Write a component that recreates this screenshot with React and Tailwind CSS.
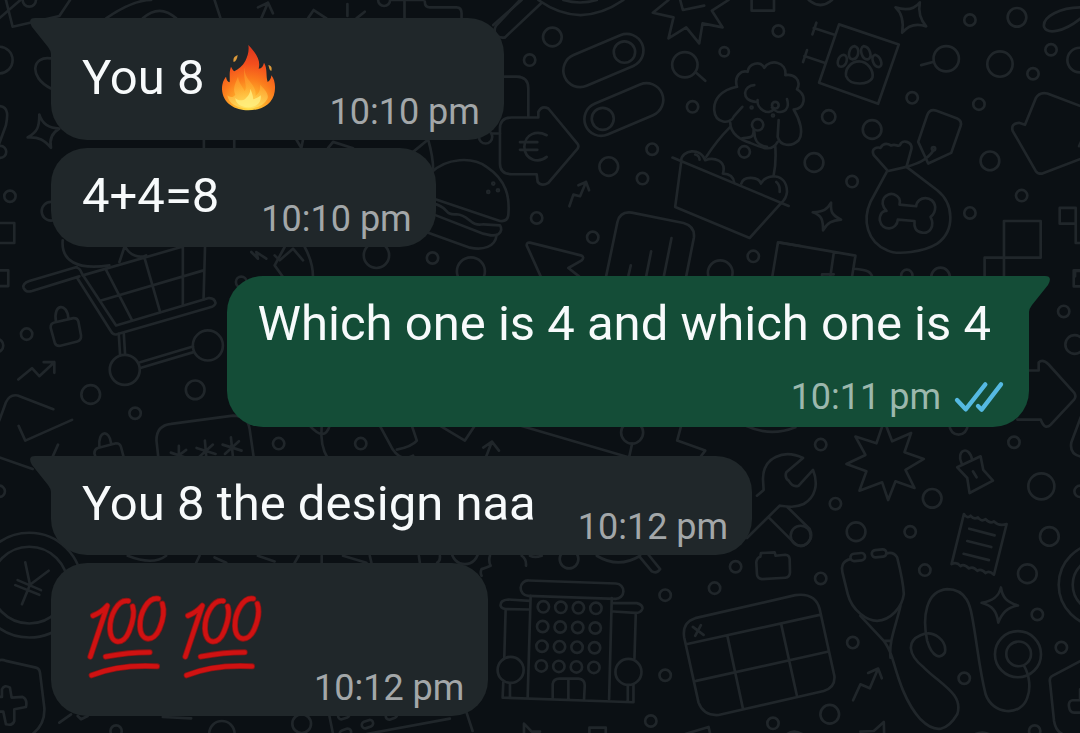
import clsx from 'clsx'

const WINDOWS = [0, 1, 2, 3].flatMap((row) => [0, 1, 2, 3].map((col) => [190 + 52.5 * col - 2 * row, 198 + 59 * row + 1.5 * col, 17]))

// Wallpaper tiles: each one is drawn on a 3x grid from its own origin.
const TILES = [
  {
    origin: [0, 0],
    circles: [[90, 0, 20], [1153, 0, 18], [0, 180, 40], [3, 455, 18], [32, 588, 17], [155, 633, 28], [1457, 410, 20], [1480, 550, 3], [1465, 575, 3], [1494, 570, 3], [1130, 765, 38], [1298, 773, 17]],
    paths: [
      'M20 0 L40 80 L180 48 L212 0 M0 55 L75 -10',
      'M320 55 Q400 0 455 0 M430 55 Q480 10 530 55 M645 0 L663 55',
      'M785 55 L805 8 M775 22 L805 8 L820 40 M925 55 L942 30 L980 55 M1043 12 V48 M1095 35 L1070 55',
      'M1175 0 H1270 M1214 0 V55 M1275 5 Q1275 22 1290 22 H1370 Q1385 22 1385 40 V55',
      'M1560 0 L1490 75 Q1480 88 1487 102 Q1500 116 1515 112 M1515 230 H1560',
      'M155 175 C100 165 85 230 155 265 M0 318 C30 320 25 350 20 375 L0 430',
      'M120 343 C128 370 145 385 180 385 C155 400 150 420 155 443 C135 420 120 410 85 412 C115 395 120 380 120 343Z',
      'M0 668 H45 V728 H0 M613 418 V444 M704 418 V444 M890 418 L905 444 L910 418 M985 444 L1000 425 L1060 444',
      'M1240 455 L1285 418 Q1300 470 1300 510 M1475 400 H1500',
      'M1290 520 C1340 470 1420 470 1460 500 C1520 540 1530 590 1525 645 Q1522 665 1500 662 L1300 595',
      'M1300 610 C1350 620 1330 645 1370 642 C1410 645 1410 680 1450 672 L1500 675 Q1510 690 1495 702 C1480 708 1470 705 1450 700 L1295 640',
      'M1490 705 C1485 740 1450 750 1410 742 L1285 697',
      'M755 755 L775 775 L770 755 L800 775 M825 765 L840 780 L880 745 L910 780',
    ],
  },
  {
    origin: [500, 0],
    circles: [[157, 111, 28], [89, 180, 17], [373, 156, 32], [308, 356, 33], [672, 155, 14], [834, 93, 17], [577, 320, 17], [326, 499, 28], [456, 447, 17], [427, 535, 17], [110, 653, 17], [278, 711, 17], [732, 455, 17], [759, 768, 17], [660, 817, 37], [554, 194, 38], [772, 374, 17], [825, 315, 10], [754, 322, 3], [818, 346, 3]],
    pills: [[190, 161, 252, 100, -23], [253, 307, 248, 100, -23]],
    paths: [
      'M-20 75 L65 0 M15 112 L125 8 M115 0 Q240 90 370 0 M190 0 Q240 15 290 0 M588 218 L615 242',
      'M505 0 L458 38 L520 52 L505 115 L558 82 L597 130 L607 70 L667 82 L635 32 L685 0 M540 0 L548 30 L612 17 M754 0 V32 H821 V0',
      'M710 260 C700 225 725 210 742 215 C745 190 780 180 792 203 C810 175 860 185 855 225 C880 220 905 240 890 268 C920 285 915 325 880 328 C900 360 910 400 895 420 C875 440 840 440 832 410 L835 360',
      'M710 260 C660 270 640 300 642 330 C645 370 690 375 702 347 L726 320 M690 368 C690 400 720 420 750 428 C790 445 815 455 832 425',
      'M762 255 C730 255 720 300 765 305 M772 300 C768 325 805 350 822 325 M815 322 C835 348 872 335 860 297',
      'M760 390 C760 420 740 410 725 415 M762 395 C762 420 775 438 800 440 M690 380 Q650 420 618 470 M825 440 Q828 490 820 525',
      'M517 472 L865 617 M543 485 L525 620 L748 713 L843 608',
      'M543 480 C545 450 600 440 615 480 C640 470 680 480 668 520 C690 520 700 530 702 548 M723 550 C730 525 775 530 782 550 C795 520 860 515 860 575 Q858 595 843 608 M585 463 Q597 465 598 478 M828 545 Q840 555 838 575',
      'M12 230 H50 Q85 230 85 265 V348 M110 522 H35 Q0 522 0 490 V385 Q0 352 35 352 H115 V335 Q125 315 145 325 L232 430 Q238 438 232 446 L145 548 Q125 560 113 545 Z',
      'M140 405 C110 390 75 400 73 440 C75 480 115 490 140 470 M60 426 H112 M60 449 H112',
      'M208 618 L220 583 L240 588 L258 545 M235 555 L258 545 L267 570',
      'M122 828 L80 735 Q80 725 90 727 L242 765 Q255 770 245 780 L205 803 L237 828',
      'M318 828 L352 665 Q360 632 395 637 L550 668 Q585 678 581 712 L558 828 M392 795 L385 825 M453 753 L438 828 M514 713 L491 828',
      'M816 828 L833 726 L900 737',
    ],
  },
  {
    origin: [780, 0],
    circles: [[568, 60, 17], [709, 52, 28], [811, 149, 17], [497, 176, 38], [658, 192, 38], [757, 221, 17], [897, 180, 37], [395, 293, 17], [595, 312, 17], [145, 350, 20], [275, 388, 28], [101, 487, 28], [215, 544, 17], [628, 482, 28], [723, 586, 17], [568, 638, 17], [379, 825, 17], [480, 830, 28], [459, 446, 5]],
    paths: [
      'M85 0 Q120 30 155 0 M460 185 L422 195 M900 22 C840 22 785 50 790 80 C800 105 850 95 900 55',
      'M176 73 L355 133 L293 311 L116 248Z M162 104 L100 84 M108 68 L96 103 M132 188 L72 168 M80 150 L68 186',
      'M236 184 C262 184 280 212 276 232 C268 256 208 258 197 228 C193 206 212 184 236 184Z',
      'M190 164 C206 168 200 198 182 200 C164 200 172 166 190 164Z M222 138 C240 144 236 176 216 178 C198 174 206 140 222 138Z M250 138 C268 140 278 172 262 178 C244 180 234 144 250 138Z M284 164 C300 168 310 196 296 201 C278 200 268 168 284 164Z',
      'M345 22 C375 32 400 30 418 7 C412 40 420 60 437 79 C405 68 380 80 365 98 C370 65 365 40 345 22Z',
      'M152 607 C150 635 155 645 182 658 C155 660 140 668 128 690 C128 660 125 645 97 636 C130 635 140 628 152 607Z',
      'M413 425 L440 345 Q448 325 468 332 L530 355 Q545 362 540 378 L512 458 L443 490 Z M459 450 C440 480 410 490 378 500',
      'M320 513 L378 500 L470 570 C520 610 525 690 470 730 C430 755 350 765 320 750 C260 725 245 660 270 605 Z',
      'M320 510 L280 465 C270 445 290 440 300 443 C310 425 325 432 332 436 C345 430 352 440 358 435 C365 415 395 425 393 445 L378 500',
      'M357 613 L407 618 C410 585 460 585 464 620 Q464 640 450 650 C465 680 445 700 425 697 C405 695 400 680 402 662 L352 658 C350 690 305 695 298 660 C297 640 308 630 318 632 C290 600 320 575 340 582 C355 587 362 600 357 613Z',
      'M900 318 L800 280 Q775 275 765 295 L733 374 L715 368 Q690 370 696 392 L765 512 Q772 522 785 520 L900 476 M895 438 L905 415',
      'M670 662 H780 V772 H670Z M612 828 V772 H670 V828 M837 623 H885 V670 H837Z M885 670 V728 H900 M883 828 V812 H900',
      'M0 727 L225 766 L215 828 M160 758 L150 828 M125 828 V822 H160 M222 805 C250 808 270 810 275 828',
    ],
  },
  {
    origin: [0, 240],
    circles: [[82, 281, 17], [-8, 315, 20], [274, 462, 28], [587, 448, 28], [407, 518, 17], [376, 388, 45], [625, 315, 45], [725, 125, 16]],
    paths: [
      'M0 90 H27 V137 H0',
      'M232 80 L90 122 Q68 130 73 143 Q80 157 98 152 L240 108 M225 82 Q240 78 248 100 L350 255 L628 173 Q645 172 648 188 Q645 198 630 201 L350 282 Q340 283 335 273 L235 115',
      'M250 105 L545 20 M318 85 L398 240 M435 52 L482 215 M550 0 V193 M617 0 L612 178 M305 180 L612 90',
      'M190 0 C185 60 230 90 330 75 M375 20 L360 65 M378 20 C390 45 420 55 440 45 M358 280 L362 345 M373 278 L377 342 M422 365 L580 318 M425 382 L582 335',
      'M165 246 L222 233 Q234 232 237 243 L245 285 Q246 300 234 303 L183 316 Q170 318 166 306 L154 262 Q153 249 165 246Z M170 243 C160 190 203 185 207 233',
      'M57 417 L98 383 L120 407 L165 365 M133 365 H165 V397',
      'M0 540 L20 485 Q32 460 55 465 L162 506 M58 556 L78 600 L218 538 M0 650 L100 685 M160 648 L176 612',
      'M290 655 L285 638 Q285 626 295 622 L350 608 Q362 608 365 620 L374 655 M300 618 C295 570 330 565 335 608',
      'M477 655 L471 600 Q470 555 515 550 L700 525 Q745 525 750 565 L763 655',
      'M538 616 V664 M514 636 L562 652 M519 658 L560 628 M616 600 L621 658 M591 622 L648 640 M598 650 L640 612 M694 590 L700 648 M669 612 L726 630 M676 640 L718 602',
    ],
  },
  {
    origin: [220, 240],
    circles: [[753, 93, 42], [177, 609, 17], [423, 609, 17], [1236, 576, 33], [2214, 555, 27], [2529, 213, 17], [2562, 312, 28]],
    paths: [
      'M195 20 L165 75 L190 110 M255 20 Q280 66 280 110 M2580 90 H2559 V138 H2580',
      'M2400 390 H2454 V366 Q2466 354 2484 372 L2560 456 Q2568 468 2560 477 L2490 552 Q2472 570 2460 537 H2390',
      'M270 555 Q315 605 330 555 M306 555 Q300 615 325 655 M480 555 L519 627 Q545 665 580 645 M576 555 L591 600 Q576 618 531 627',
      'M660 555 L735 600 L765 555 M798 650 L816 603 L837 630 M790 621 L816 603 M900 555 L1225 650 M1236 609 L1227 650 M1383 555 L1371 600 L1455 630 L1440 650 M1575 555 Q1650 590 1725 560',
    ],
  },
  {
    origin: [740, 400],
    circles: [[241, 132, 17], [285, 309, 17], [347, 393, 28], [509, 393, 17], [575, 293, 28], [553, 508, 17], [241, 533, 17], [337, 725, 17], [268, 940, 28], [98, 967, 17], [820, 125, 17], [902, 257, 39], [926, 407, 28], [860, 519, 28], [890, 641, 17], [962, 740, 17], [671, 832, 17], [882, 990, 17], [1018, 272, 17], [832, 760, 69], [834, 759, 37], [1078, 552, 124], [1078, 552, 82]],
    pills: [[330, 459, 44, 22, -6], [394, 448, 44, 22, -6]],
    paths: [
      'M188 172 C130 145 68 170 68 235 L70 268 L50 285 M188 172 L138 215 Q132 230 145 240 Q158 262 175 255 L218 208 C235 250 225 290 190 310 C165 322 140 318 118 315 L20 412 M85 350 L160 425 Q180 445 200 428 Q220 410 208 385 L140 318',
      'M425 78 L408 128 L345 108 L375 163 L318 190 L378 212 L357 270 L425 245 L443 298 L465 242 L522 262 L495 208 L550 175 L492 155 L512 97 L455 122 L438 78',
      'M663 188 C645 150 685 130 695 178 M650 200 L720 167 L728 208 L757 240 L687 277 L680 232 Z M697 212 L708 230',
      'M670 340 Q680 355 690 345 Q700 358 712 350 Q722 365 735 355 Q748 370 760 362 Q775 378 798 370 L760 522 Q745 508 735 517 Q722 502 710 510 Q698 495 685 503 Q670 488 660 496 Q648 482 633 490Z M686 384 L762 404 M680 421 L752 439 M669 459 L745 478',
      'M60 468 L62 457 L103 455 L106 465 L135 462 Q147 463 148 475 L149 515 Q148 530 135 531 L65 535 Q50 533 50 520 L48 485 Q50 470 60 468Z',
      'M330 475 C305 480 302 500 306 515 L322 580 C335 630 380 660 410 660 C450 658 485 620 490 580 C488 540 475 490 470 470 Q460 452 437 458',
      'M360 645 L430 720 Q445 740 455 770 C470 820 490 900 540 955 C585 1000 620 990 650 940 C670 880 600 850 550 800 C500 760 500 720 540 703 C580 685 620 720 613 755 C600 775 575 770 560 720 C545 650 555 570 620 565 C680 565 690 620 695 650 C710 730 715 800 735 880 C755 940 840 950 860 890 C872 860 865 820 850 795 M480 615 C465 680 445 720 450 770 M430 720 H450',
      'M338 898 L360 850 L388 862 L413 803 M383 816 L413 803 L424 832',
      'M781 560 C785 590 800 605 832 614 C800 620 785 635 773 665 C768 630 755 615 723 606 C760 600 775 585 781 560Z',
      'M1020 780 L935 825 Q925 830 928 845 L940 960 Q945 990 965 999 M1020 898 H995 Q982 900 985 918 Q987 935 1000 935 H1020 M1018 865 V898',
      'M1020 50 L992 125 Q985 160 1020 168 M360 992 L400 990 L430 963 L431 999 M705 999 Q725 990 745 999 M140 999 Q160 985 185 999',
    ],
  },
  {
    origin: [480, 540],
    circles: [[267, 55, 28], [555, 163, 17], [703, 142, 17], [766, 78, 17], [555, 403, 17], [512, 540, 17], [961, -15, 30], [92, 387, 39], [445, 393, 39], ...WINDOWS],
    pills: [[122, 119, 308, 46, 2]],
    paths: [
      'M30 45 Q25 60 32 75 Q20 80 5 85 Q0 95 5 105 M125 45 Q140 55 138 75 M150 45 Q165 52 185 45 M350 45 Q415 85 480 45 M480 50 L515 92 Q530 100 540 85 L505 42',
      'M152 165 L143 470 M395 172 L387 475 M150 180 L85 176 Q60 178 62 195 Q65 205 85 205 L148 206 M397 187 H470 Q488 192 487 203 Q483 217 465 216 L400 212 M77 207 L73 350 M467 218 L463 352',
      'M70 425 L68 470 L460 484 V430 M90 427 V468 M443 433 V482 M218 470 V430 Q220 412 240 413 H295 Q315 415 314 435 L312 475 M265 415 V472',
      'M612 290 Q605 245 645 232 L945 163 Q1005 155 1018 205 L1062 405 Q1065 440 1030 450 L715 522 Q670 525 655 485 Z M618 310 L1018 222 M648 420 L1045 332 M742 288 L788 503 M903 252 L950 466 M638 258 L670 282 M662 253 L645 285',
      'M132 579 V548 L155 572 H180 M328 579 V560 H377 V579 M615 579 L685 558 L690 579',
    ],
  },
  {
    origin: [0, 440],
    circles: [[0, 152, 17], [90, 433, 157], [90, 433, 115], [1395, 330, 40], [350, 870, 17], [667, 878, 38], [906, 848, 28]],
    pills: [[1015, 815, 35, 20, -20], [1086, 842, 35, 20, -20], [1020, 868, 35, 20, -20], [1158, 816, 35, 20, -20]],
    paths: [
      'M78 365 L92 432 L148 390 M92 432 L68 490 M55 418 L125 448 M48 433 L120 462',
      'M0 658 Q10 655 20 660 L110 680 Q120 682 122 695 L135 800 Q138 850 100 879',
      'M0 768 L8 768 V745 Q15 730 32 740 L37 770 L70 768 Q85 775 80 798 L45 805 V840 Q40 855 20 850 L12 812 H0',
      'M385 345 Q460 375 500 345 M590 366 L600 345 M645 350 L680 366 M775 345 L825 362 M885 366 L897 345 M966 345 V366 M1030 345 L1100 366 M1110 345 L1115 366 M1257 345 L1260 366 M1320 345 Q1322 360 1312 366',
      'M180 845 L215 820 M235 825 L245 835 L265 825 M490 828 L575 832 M988 820 L1000 879 M1400 815 L1418 870 M1100 879 L1350 833',
    ],
  },
]

const HUNDRED =
  'M54 92 Q80 82 97 62 L46 215 M160 48 C128 42 104 92 105 132 C107 180 145 182 162 140 C174 110 180 85 173 64 M250 41 C218 36 194 84 195 124 C197 172 236 172 253 132 C265 104 270 80 262 56 M92 215 Q160 202 224 202 M50 271 Q130 238 246 244'

function Wallpaper() {
  return (
    <svg className="absolute inset-0 h-full w-full" viewBox="0 0 1080 733" preserveAspectRatio="xMidYMid slice" aria-hidden="true">
      <g fill="none" stroke="#20262a" strokeWidth="8" strokeLinecap="round" strokeLinejoin="round">
        {TILES.map(({ origin, circles, pills = [], paths }, i) => (
          <g key={i} transform={`translate(${origin[0]} ${origin[1]}) scale(0.33333)`}>
            {circles.map(([cx, cy, r], j) => (
              <circle key={j} cx={cx} cy={cy} r={r} />
            ))}
            {pills.map(([x, y, w, h, turn], j) => (
              <rect key={j} x={x} y={y} width={w} height={h} rx={h / 2} transform={`rotate(${turn} ${x + h / 2} ${y + h / 2})`} />
            ))}
            {paths.map((d, j) => (
              <path key={j} d={d} />
            ))}
          </g>
        ))}
      </g>
    </svg>
  )
}

function Fire() {
  return (
    <svg className="h-[70px] w-[72px] shrink-0" viewBox="48 21 216 210" role="img" aria-label="Fire">
      <defs>
        <radialGradient id="flame" cx="145" cy="215" r="175" gradientUnits="userSpaceOnUse">
          <stop offset="0" stopColor="#ffe14a" />
          <stop offset="0.25" stopColor="#ffb02a" />
          <stop offset="0.5" stopColor="#fb7a1c" />
          <stop offset="0.75" stopColor="#f34f1d" />
          <stop offset="1" stopColor="#e03a1e" />
        </radialGradient>
        <linearGradient id="core" x1="0" y1="85" x2="0" y2="220" gradientUnits="userSpaceOnUse">
          <stop offset="0" stopColor="#fd8a25" />
          <stop offset="0.5" stopColor="#ffb235" />
          <stop offset="1" stopColor="#fff07a" />
        </linearGradient>
      </defs>
      <path d="M113 57 C103 61 98 68 101 78 C108 76 112 68 113 57Z M205 87 C213 88 217 94 214 105 C207 102 208 95 205 87Z" fill="#dc9a3a" />
      <path d="M145 27 C172 55 182 75 176 98 C185 97 190 90 192 80 C203 98 197 118 203 138 C210 134 214 126 214 118 C224 130 227 148 224 167 C219 204 185 223 145 223 C105 223 68 203 66 160 C66 140 72 130 78 122 C79 130 83 138 89 139 C90 120 87 108 93 92 C97 98 98 103 103 106 C115 100 128 90 136 75 C143 60 148 45 145 27Z" fill="url(#flame)" />
      <path d="M138 88 C126 112 146 130 158 148 C166 160 168 170 166 180 C176 172 182 162 180 146 C194 160 206 172 203 186 C194 208 170 217 146 217 C112 217 86 204 82 178 C92 186 100 184 106 176 C96 158 108 138 114 122 C118 146 128 150 134 166 C146 150 122 116 138 88Z" fill="url(#core)" opacity="0.6" />
      <path d="M151 158 C156 172 160 180 159 190 C168 188 176 184 182 178 C186 200 168 214 146 214 C122 214 106 202 106 186 C114 196 130 194 136 188 C144 180 151 172 151 158Z" fill="#fff083" opacity="0.75" />
    </svg>
  )
}

function Hundred() {
  return (
    <svg className="h-24 w-[95px] shrink-0" viewBox="21 15 285 288" role="img" aria-label="Hundred points" fill="none" strokeLinecap="round" strokeLinejoin="round">
      <path d={HUNDRED} stroke="#8c1414" strokeWidth="18" />
      <path d={HUNDRED} stroke="#d01212" strokeWidth="13" />
    </svg>
  )
}

function ReadTicks() {
  return (
    <svg className="h-[34px] w-[52px] shrink-0" viewBox="36 30 156 102" role="img" aria-label="Read" fill="none" stroke="#55b9e2" strokeWidth="13" strokeLinecap="round" strokeLinejoin="round">
      <path d="M48 90 L74 118 L133 43 M111 108 L122 119 L180 43" />
    </svg>
  )
}

function Tail({ mine }) {
  return (
    <svg
      className={clsx('absolute top-0 h-9 w-[22px]', mine ? '-right-[21px] -scale-x-100 fill-[#144d37]' : '-left-[21px] fill-[#20272a]')}
      viewBox="0 0 22 36"
      aria-hidden="true"
    >
      <path d="M5 0 H22 V36 H21 Q21 33 18 29 L2 9 Q-3 0 5 0Z" />
    </svg>
  )
}

// The first bubble of a sender's run carries the tail and the wider gap above.
function Bubble({ time, mine, tail, children }) {
  return (
    <li
      className={clsx(
        'relative flex w-fit max-w-full rounded-[36px] pl-[31px] pr-6 first:mt-0',
        mine ? 'flex-col self-end bg-[#144d37] pb-0.5' : 'items-end gap-[42px] bg-[#20272a]',
        tail ? 'mt-[29px]' : 'mt-2',
        tail && (mine ? 'rounded-tr-none' : 'rounded-tl-none'),
      )}
    >
      {tail && <Tail mine={mine} />}
      <div className={clsx('flex items-center gap-[11px] pt-[17px] text-[49px] leading-[62px] text-[#f7fafb]', mine ? 'pr-[14px]' : 'pb-5')}>{children}</div>
      <div className={clsx('flex shrink-0 items-center gap-3 pb-2 text-4xl leading-10', mine ? 'mt-[22px] self-end text-[#9cb8ad]' : 'text-[#a3a7a9]')}>
        <time>{time}</time>
        {mine && <ReadTicks />}
      </div>
    </li>
  )
}

export default function App() {
  return (
    <main className="relative min-h-screen overflow-hidden bg-[#0b1014] font-[Roboto,sans-serif]">
      <Wallpaper />
      <ul className="relative flex flex-col px-[51px] py-[18px]">
        <Bubble time="10:10 pm" tail>
          <p className="leading-[85px]">You 8</p>
          <Fire />
        </Bubble>
        <Bubble time="10:10 pm">
          <p>4+4=8</p>
        </Bubble>
        <Bubble time="10:11 pm" mine tail>
          <p>Which one is 4 and which one is 4</p>
        </Bubble>
        <Bubble time="10:12 pm" tail>
          <p>You 8 the design naa</p>
        </Bubble>
        <Bubble time="10:12 pm">
          <div className="flex h-[116px] items-center">
            <Hundred />
            <Hundred />
          </div>
        </Bubble>
      </ul>
    </main>
  )
}
